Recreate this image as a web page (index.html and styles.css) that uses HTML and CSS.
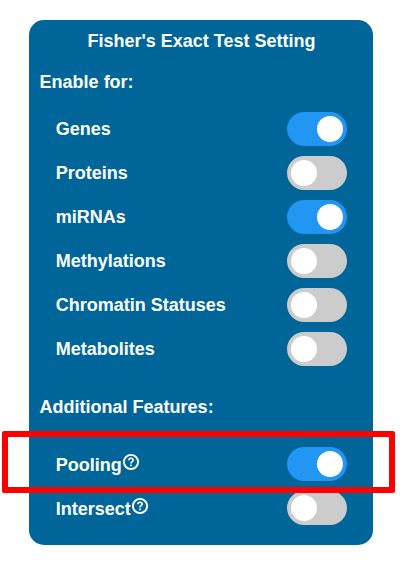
FILE: index.html
```html
<!DOCTYPE html>
<html lang="en">
<head>
<meta charset="utf-8">
<title>Fisher's Exact Test Setting</title>
<link rel="stylesheet" href="styles.css">
</head>
<body>
<main class="card">
  <h1 class="title">Fisher's Exact Test Setting</h1>
  <h2 class="heading">Enable for:</h2>
  <div class="options">
    <label class="option"><span>Genes</span><input class="switch" type="checkbox" checked></label>
    <label class="option"><span>Proteins</span><input class="switch" type="checkbox"></label>
    <label class="option"><span>miRNAs</span><input class="switch" type="checkbox" checked></label>
    <label class="option"><span>Methylations</span><input class="switch" type="checkbox"></label>
    <label class="option"><span>Chromatin Statuses</span><input class="switch" type="checkbox"></label>
    <label class="option"><span>Metabolites</span><input class="switch" type="checkbox"></label>
  </div>
  <h2 class="heading">Additional Features:</h2>
  <div class="options">
    <label class="option highlighted"><span class="name">Pooling<svg class="help" viewBox="0 0 18 18"><circle cx="9" cy="9" r="7.1"/><path d="M6.9 7.3C6.9 4.6 11.1 4.6 11.1 7.1C11.1 8.7 9 8.6 9 10.4M9 11.4V13.2"/></svg></span><input class="switch" type="checkbox" checked></label>
    <label class="option"><span class="name">Intersect<svg class="help" viewBox="0 0 18 18"><circle cx="9" cy="9" r="7.1"/><path d="M6.9 7.3C6.9 4.6 11.1 4.6 11.1 7.1C11.1 8.7 9 8.6 9 10.4M9 11.4V13.2"/></svg></span><input class="switch" type="checkbox"></label>
  </div>
</main>
</body>
</html>
```
FILE: styles.css
```css
body {
  margin: 0;
  background: #fff;
  font: bold 18px/20px "Liberation Sans", Arial, sans-serif;
  color: #fff;
}

.card {
  box-sizing: border-box;
  width: 344px;
  height: 525px;
  margin: 20px 0 0 29px;
  padding: 11px 26px 0 26.8px;
  border-radius: 15px;
  background: #069;
}

.title {
  margin: 0;
  font-size: 18px;
  text-align: center;
}

.heading {
  margin: 21px 0 20px -16.2px;
  font-size: 18px;
}

.options {
  display: flex;
  flex-direction: column;
  gap: 10px;
}

.options + .heading {
  margin: 31px 0 30px -16.2px;
}

.option {
  position: relative;
  display: flex;
  align-items: center;
  justify-content: space-between;
  height: 34px;
}

.name {
  display: flex;
  align-items: center;
  padding-top: 2px;
}

.help {
  width: 18px;
  height: 18px;
  margin: -7px 0 0 0;
  fill: none;
  stroke: #fff;
  stroke-width: 1.9;
}

.help path {
  stroke-width: 1.7;
}

.switch {
  appearance: none;
  display: flex;
  align-items: center;
  box-sizing: border-box;
  width: 60px;
  height: 34px;
  margin: 0;
  padding: 0 4px;
  border-radius: 34px;
  background: #ccc;
}

.switch::before {
  content: "";
  width: 26px;
  height: 26px;
  border-radius: 50%;
  background: #fff;
}

.switch:checked {
  justify-content: flex-end;
  background: #2196f3;
}

.highlighted::after {
  content: "";
  position: absolute;
  z-index: 1;
  inset: -16px -48px -12px -53.6px;
  border: 6px solid #f00;
  border-radius: 2px;
}
```
